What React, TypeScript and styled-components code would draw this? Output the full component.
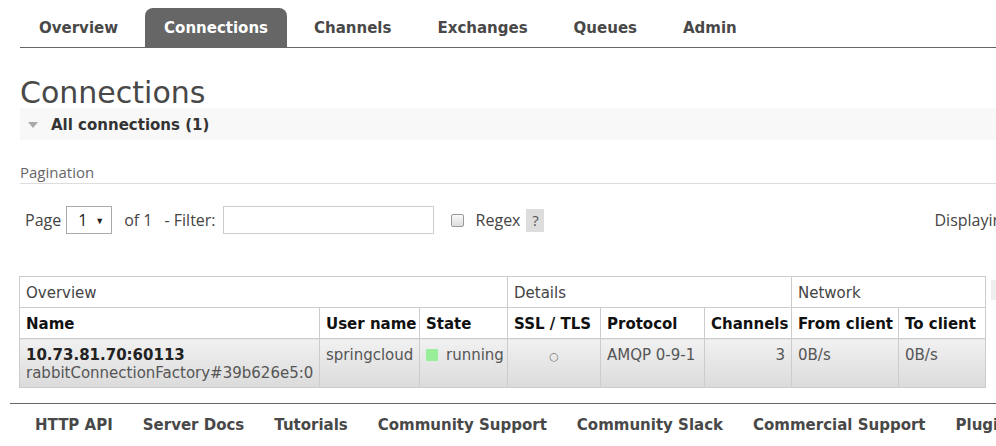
import styled, { createGlobalStyle } from "styled-components"

const GlobalStyle = createGlobalStyle`
  html, body {
    margin: 0;
    padding: 0;
    background: #fff;
    overflow: hidden;
  }
  body {
    font-family: "DejaVu Sans", Verdana, sans-serif;
    color: #484848;
  }
`

const Page = styled.div`
  width: 1320px;
  padding-top: 8px;
`

const Main = styled.main`
  padding-left: 20px;
`

const Tabs = styled.ul`
  display: flex;
  gap: 8px;
  list-style: none;
  margin: 0;
  padding: 0;
  height: 39px;
  border-bottom: 1px solid #666;
`

const Tab = styled.li<{ $active?: boolean }>`
  padding: 1px 19px 0;
  line-height: 38px;
  font-size: 15px;
  font-weight: bold;
  border-radius: 8px 8px 0 0;
  background: ${p => (p.$active ? "#666" : "transparent")};
  color: ${p => (p.$active ? "#fff" : "#484848")};
`

const Title = styled.h1`
  margin: 30px 0 0;
  font-size: 30px;
  line-height: 30px;
  font-weight: normal;
  color: #484848;
`

const SectionBar = styled.div`
  display: flex;
  align-items: center;
  gap: 13px;
  height: 32px;
  padding: 1px 0 0 8px;
  box-sizing: border-box;
  background: #f8f8f8;
  font-size: 15px;
  font-weight: bold;
  color: #333;
`

const Arrow = styled.span`
  width: 0;
  height: 0;
  border-left: 5px solid transparent;
  border-right: 5px solid transparent;
  border-top: 6px solid #aaa;
`

const SubTitle = styled.h3`
  margin: 21px 0 0;
  font-family: "Open Sans", sans-serif;
  font-size: 15px;
  font-weight: normal;
  line-height: 22px;
  color: #666;
  border-bottom: 1px solid #ddd;
`

const PagerRow = styled.div`
  display: flex;
  align-items: center;
  height: 28px;
  margin-top: 22px;
  padding-left: 5px;
  font-family: "Open Sans", sans-serif;
  font-size: 16px;
  color: #444;
  white-space: nowrap;
`

const Label = styled.span<{ $ml?: number }>`
  margin-left: ${p => p.$ml ?? 0}px;
`

const SelectBox = styled.span`
  display: flex;
  align-items: center;
  justify-content: space-between;
  box-sizing: border-box;
  width: 46px;
  height: 28px;
  margin-left: 5px;
  padding: 0 7px 0 11px;
  border: 1px solid #aaa;
  color: #222;
  font-size: 16px;
  &::after {
    content: "▼";
    font-size: 9px;
  }
`

const FilterInput = styled.input`
  box-sizing: border-box;
  width: 211px;
  height: 28px;
  margin-left: 7px;
  border: 1px solid #ccc;
  outline: none;
`

const CheckBox = styled.span`
  box-sizing: border-box;
  width: 13px;
  height: 13px;
  margin-left: 17px;
  border: 1px solid #999;
  border-radius: 2px;
  background: linear-gradient(#fafafa, #ddd);
`

const HelpBox = styled.span`
  display: flex;
  align-items: center;
  justify-content: center;
  width: 18px;
  height: 23px;
  margin-left: 6px;
  background: #ddd;
  color: #555;
  font-size: 15px;
`

const TableArea = styled.div`
  display: flex;
  align-items: flex-start;
  gap: 5px;
  margin: 42px 0 0 -1px;
`

const List = styled.table`
  width: 966px;
  border-collapse: collapse;
  table-layout: fixed;
  font-size: 15px;
  line-height: 18px;
`

const GroupCell = styled.th`
  padding: 7px 6px 5px;
  border: 1px solid #ccc;
  text-align: left;
  font-weight: normal;
  color: #444;
  white-space: nowrap;
`

const HeadCell = styled.th`
  padding: 7px 6px 5px;
  border: 1px solid #ccc;
  text-align: left;
  font-weight: bold;
  color: #111;
  white-space: nowrap;
`

const Cell = styled.td<{ $align?: string }>`
  padding: 7px 6px 5px;
  border: 1px solid #ccc;
  vertical-align: top;
  text-align: ${p => p.$align ?? "left"};
  color: #555;
  white-space: nowrap;
  overflow: hidden;
  background: linear-gradient(#f1f1f1, #dbdbdb);
`

const ConnName = styled.div`
  font-weight: bold;
  color: #222;
`

const Status = styled.span`
  display: inline-block;
  width: 12px;
  height: 12px;
  margin-right: 8px;
  vertical-align: -1px;
  background: #99ee99;
`

const Dot = styled.span`
  font-size: 11px;
  color: #777;
`

const ColumnsButton = styled.span`
  display: block;
  width: 22px;
  height: 20px;
  margin-top: 4px;
  background: #eee;
`

const Footer = styled.footer`
  display: flex;
  gap: 30px;
  margin: 15px 0 0 10px;
  padding: 12px 0 0 25px;
  border-top: 1px solid #666;
  font-size: 15px;
  line-height: 18px;
  font-weight: bold;
  color: #484848;
  white-space: nowrap;
`

const tabs = ["Overview", "Connections", "Channels", "Exchanges", "Queues", "Admin"]
const links = [
  "HTTP API",
  "Server Docs",
  "Tutorials",
  "Community Support",
  "Community Slack",
  "Commercial Support",
  "Plugins",
  "GitHub",
  "Changelog",
]
const widths = [300, 100, 88, 93, 104, 87, 107, 87]

export default function App() {
  return (
    <Page>
      <GlobalStyle />
      <Main>
        <Tabs>
          {tabs.map(t => (
            <Tab key={t} $active={t === "Connections"}>{t}</Tab>
          ))}
        </Tabs>

        <Title>Connections</Title>
        <SectionBar>
          <Arrow />
          All connections (1)
        </SectionBar>

        <SubTitle>Pagination</SubTitle>
        <PagerRow>
          <Label>Page</Label>
          <SelectBox>1</SelectBox>
          <Label $ml={12}>of 1</Label>
          <Label $ml={12}>- Filter:</Label>
          <FilterInput />
          <CheckBox />
          <Label $ml={12}>Regex</Label>
          <HelpBox>?</HelpBox>
          <Label $ml={390}>Displaying 1 item , page size up to: 100</Label>
        </PagerRow>

        <TableArea>
          <List>
            <colgroup>
              {widths.map((w, i) => (
                <col key={i} style={{ width: w }} />
              ))}
            </colgroup>
            <thead>
              <tr>
                <GroupCell colSpan={3}>Overview</GroupCell>
                <GroupCell colSpan={3}>Details</GroupCell>
                <GroupCell colSpan={2}>Network</GroupCell>
              </tr>
              <tr>
                <HeadCell>Name</HeadCell>
                <HeadCell>User name</HeadCell>
                <HeadCell>State</HeadCell>
                <HeadCell>SSL / TLS</HeadCell>
                <HeadCell>Protocol</HeadCell>
                <HeadCell>Channels</HeadCell>
                <HeadCell>From client</HeadCell>
                <HeadCell>To client</HeadCell>
              </tr>
            </thead>
            <tbody>
              <tr>
                <Cell>
                  <ConnName>10.73.81.70:60113</ConnName>
                  rabbitConnectionFactory#39b626e5:0
                </Cell>
                <Cell>springcloud</Cell>
                <Cell>
                  <Status />
                  running
                </Cell>
                <Cell $align="center"><Dot>○</Dot></Cell>
                <Cell>AMQP 0-9-1</Cell>
                <Cell $align="right">3</Cell>
                <Cell>0B/s</Cell>
                <Cell>0B/s</Cell>
              </tr>
            </tbody>
          </List>
          <ColumnsButton />
        </TableArea>
      </Main>

      <Footer>
        {links.map(l => (
          <span key={l}>{l}</span>
        ))}
      </Footer>
    </Page>
  )
}
